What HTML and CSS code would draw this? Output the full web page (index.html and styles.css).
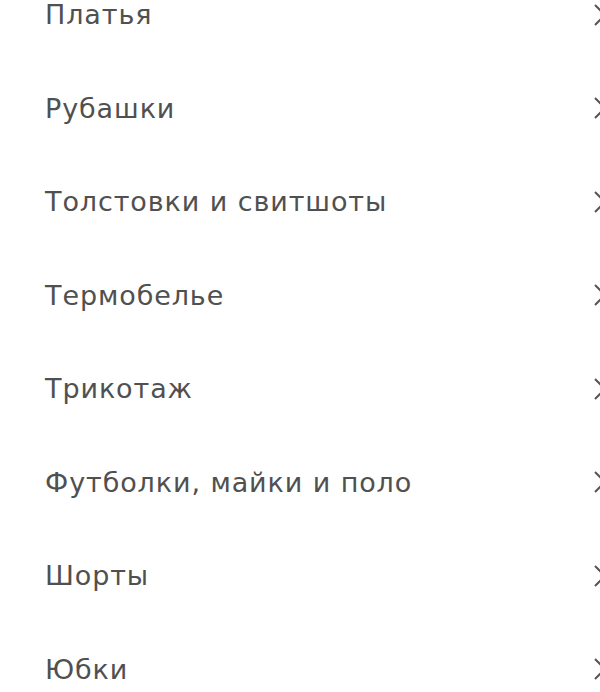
FILE: index.html
```html
<!DOCTYPE html>
<html lang="ru">
<head>
    <meta charset="UTF-8">
    <meta name="viewport" content="width=device-width, initial-scale=1.0">
    <title>Категории</title>
    <link rel="stylesheet" href="styles.css">
</head>
<body>
    <ul class="menu">
        <li class="menu-item"><span class="menu-label">Платья</span><svg class="chevron" viewBox="0 0 12 22"><path d="M1 1 L11 11 L1 21"/></svg></li>
        <li class="menu-item"><span class="menu-label">Рубашки</span><svg class="chevron" viewBox="0 0 12 22"><path d="M1 1 L11 11 L1 21"/></svg></li>
        <li class="menu-item"><span class="menu-label">Толстовки и свитшоты</span><svg class="chevron" viewBox="0 0 12 22"><path d="M1 1 L11 11 L1 21"/></svg></li>
        <li class="menu-item"><span class="menu-label">Термобелье</span><svg class="chevron" viewBox="0 0 12 22"><path d="M1 1 L11 11 L1 21"/></svg></li>
        <li class="menu-item"><span class="menu-label">Трикотаж</span><svg class="chevron" viewBox="0 0 12 22"><path d="M1 1 L11 11 L1 21"/></svg></li>
        <li class="menu-item"><span class="menu-label">Футболки, майки и поло</span><svg class="chevron" viewBox="0 0 12 22"><path d="M1 1 L11 11 L1 21"/></svg></li>
        <li class="menu-item"><span class="menu-label">Шорты</span><svg class="chevron" viewBox="0 0 12 22"><path d="M1 1 L11 11 L1 21"/></svg></li>
        <li class="menu-item"><span class="menu-label">Юбки</span><svg class="chevron" viewBox="0 0 12 22"><path d="M1 1 L11 11 L1 21"/></svg></li>
    </ul>
</body>
</html>
```

FILE: styles.css
```css
* {
    margin: 0;
    padding: 0;
    box-sizing: border-box;
}

html, body {
    background: #ffffff;
    overflow: hidden;
}

body {
    font-family: 'DejaVu Sans', 'Noto Sans', sans-serif;
    color: #505050;
    height: 692px;
}

.menu {
    list-style: none;
    width: 620px;
    margin-top: -32px;
}

.menu-item {
    display: flex;
    align-items: center;
    height: 93.5px;
    padding-left: 45px;
    padding-right: 14px;
}

.menu-label {
    flex: 1;
    font-size: 27px;
    letter-spacing: 0.9px;
    line-height: 1;
}

.chevron {
    width: 12px;
    height: 22px;
    fill: none;
    stroke: #555555;
    stroke-width: 2;
}
```
